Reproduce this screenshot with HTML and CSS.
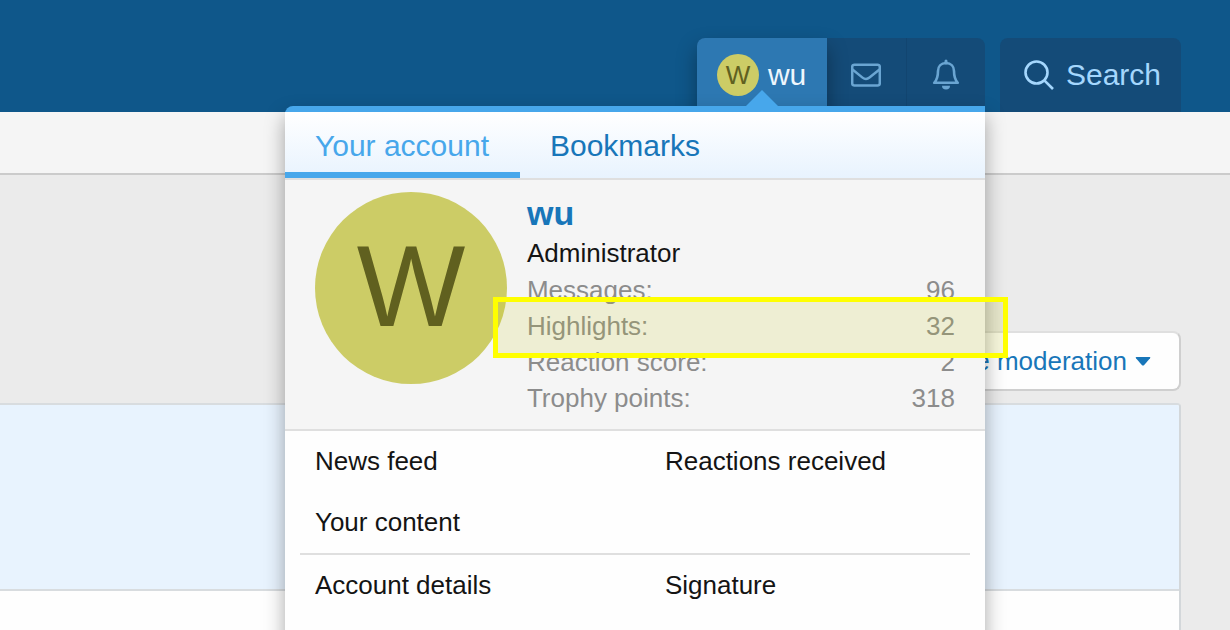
FILE: index.html
```
<!DOCTYPE html>
<html lang="en">
<head>
  <meta charset="UTF-8" />
  <meta name="viewport" content="width=device-width, initial-scale=1.0" />
  <title>Your account</title>
  <link rel="stylesheet" href="styles.css">
</head>
<body>

  <header class="header">
    <nav class="nav-group account">
      <a class="nav-link active" href="#">
        <span class="avatar avatar-small">W</span>
        <span>wu</span>
      </a>
      <a class="nav-link nav-icon" href="#" aria-label="Inbox">
        <svg width="30" height="24" viewBox="0 0 30 24" fill="none" stroke="currentColor" stroke-width="2.5" stroke-linejoin="round">
          <rect x="1.2" y="1.8" width="27.6" height="20.6" rx="2.2" />
          <path d="M1.500 6.500 L11.500 14.600 Q15 17.400 18.500 14.600 L28.500 6.500" />
        </svg>
      </a>
      <a class="nav-link nav-icon" href="#" aria-label="Alerts">
        <svg width="28" height="32" viewBox="0 0 28 32" fill="none" stroke="currentColor" stroke-width="2.6" stroke-linejoin="round">
          <path d="M14 2 V4" stroke-width="3" stroke-linecap="round" />
          <path d="M14 4 C9 4 6 7.500 6 12 C6 18 4.500 21.500 2.200 23.800 H25.800 C23.500 21.500 22 18 22 12 C22 7.500 19 4 14 4 Z" />
          <path d="M10 26.800 H18 A4 3.800 0 0 1 10 26.800 Z" fill="currentColor" stroke="none" />
        </svg>
      </a>

      <!-- Account menu -->
      <div class="menu">
        <div class="menu-arrow"></div>
        <div class="tabs">
          <a class="tab active" href="#">Your account</a>
          <a class="tab" href="#">Bookmarks</a>
        </div>
        <div class="profile">
          <span class="avatar avatar-large">W</span>
          <div class="profile-info">
            <a class="username" href="#">wu</a>
            <div class="user-title">Administrator</div>
            <dl class="stats">
              <div class="stat"><dt>Messages:</dt><dd>96</dd></div>
              <div class="stat marked"><dt>Highlights:</dt><dd>32</dd></div>
              <div class="stat"><dt>Reaction score:</dt><dd>2</dd></div>
              <div class="stat"><dt>Trophy points:</dt><dd>318</dd></div>
            </dl>
          </div>
        </div>
        <div class="menu-links">
          <a href="#">News feed</a>
          <a href="#">Reactions received</a>
          <a href="#">Your content</a>
        </div>
        <hr class="separator">
        <div class="menu-links">
          <a href="#">Account details</a>
          <a href="#">Signature</a>
        </div>
      </div>
    </nav>

    <button class="nav-group search" type="button">
      <svg width="30" height="30" viewBox="0 0 30 30" fill="none" stroke="currentColor" stroke-width="2.6">
        <circle cx="12.500" cy="12.500" r="11" />
        <path d="M20.300 20.300 L29 29" />
      </svg>
      <span>Search</span>
    </button>
  </header>

  <div class="sub-nav"></div>

  <main class="content">
    <button class="moderation" type="button">
      Inline moderation
      <svg width="16" height="9" viewBox="0 0 16 9"><path d="M1.500 0 H14.500 Q16 0 15 1.200 L9 8.200 Q8 9 7 8.200 L1 1.200 Q0 0 1.500 0 Z" fill="currentColor" /></svg>
    </button>
    <div class="block">
      <div class="block-row"></div>
    </div>
  </main>

</body>
</html>
```
FILE: styles.css
```
* { box-sizing: border-box; margin: 0; padding: 0; }
body {
  display: flex;
  flex-direction: column;
  height: 100vh;
  overflow: hidden;
  background: #ebebeb;
  font-family: "Liberation Sans", Arial, sans-serif;
  font-size: 26px;
  line-height: 36px;
  color: #141414;
}
a { color: inherit; text-decoration: none; }
button { border: none; font: inherit; cursor: pointer; }
svg { display: block; flex: none; }

/* Header */
.header {
  display: flex;
  justify-content: flex-end;
  gap: 15px;
  padding: 38px 49px 0 0;
  background: #0f578a;
}
.nav-group {
  display: flex;
  height: 74px;
  border-radius: 8px 8px 0 0;
  background: #144b78;
}
.account { position: relative; }
.nav-link {
  display: flex;
  align-items: center;
  gap: 9px;
  padding: 0 20px;
  font-size: 30px;
  color: #6aa5d2;
}
.nav-link.active {
  z-index: 1;
  width: 130px;
  border-radius: 8px 0 0 0;
  background: #2d78b2;
  box-shadow: 0 10px 20px rgba(0, 0, 0, 0.35);
  color: #edf6fd;
}
.nav-icon {
  justify-content: center;
  width: 79px;
}
.nav-icon + .nav-icon { border-left: 1px solid #124570; }
.search {
  align-items: center;
  gap: 12px;
  padding: 0 20px 0 24px;
  font-size: 30px;
  color: #a5d7fd;
}

.avatar {
  display: flex;
  flex: none;
  align-items: center;
  justify-content: center;
  border-radius: 50%;
  background: #cccc66;
  color: #60601f;
}
.avatar-small {
  width: 42px;
  height: 42px;
  font-size: 26px;
}
.avatar-large {
  width: 192px;
  height: 192px;
  padding-bottom: 4px;
  font-size: 115px;
}

/* Menu */
.menu {
  position: absolute;
  top: 68px;
  right: 0;
  z-index: 2;
  width: 700px;
  padding-bottom: 30px;
  border-top: 6px solid #47a7eb;
  border-radius: 8px 0 0 0;
  background: #fefefe;
  box-shadow: 0 10px 20px rgba(0, 0, 0, 0.35);
}
.menu-arrow {
  position: absolute;
  top: -22px;
  left: 461px;
  border: 16px solid transparent;
  border-top: none;
  border-bottom-color: #47a7eb;
}
.tabs {
  display: flex;
  border-bottom: 2px solid #dfdfdf;
  background: linear-gradient(#ffffff, #e8f3fe);
}
.tab {
  padding: 16px 31px 8px 30px;
  border-bottom: 6px solid transparent;
  font-size: 30px;
  color: #1876b9;
}
.tab.active {
  border-bottom-color: #47a7eb;
  color: #47a7eb;
}
.profile {
  display: flex;
  gap: 20px;
  padding: 12px 30px 13px;
  border-bottom: 2px solid #dfdfdf;
  background: #f5f5f5;
}
.profile-info { flex: 1; }
.username {
  display: block;
  margin-bottom: 1px;
  font-size: 34px;
  font-weight: bold;
  line-height: 42px;
  color: #1876b9;
}
.stats {
  margin-top: 1px;
  color: #8c8c8c;
}
.stat {
  display: flex;
  justify-content: space-between;
}
.marked { position: relative; }
.marked::after {
  content: "";
  position: absolute;
  inset: -11px -53px -14px -34px;
  border: 5px solid #ffff00;
  background: rgba(200, 200, 20, 0.15);
}
.menu-links {
  display: grid;
  grid-template-columns: 1fr 1fr;
}
.menu-links a { padding: 12px 30px 13px; }
.separator {
  margin: 0 15px;
  border: none;
  border-top: 2px solid #dfdfdf;
}

/* Page */
.sub-nav {
  flex: none;
  height: 63px;
  border-bottom: 2px solid #cbcbcb;
  background: #f5f5f5;
}
.content {
  display: flex;
  flex: 1;
  flex-direction: column;
  padding: 156px 49px 0 0;
}
.moderation {
  display: flex;
  align-items: center;
  align-self: flex-end;
  gap: 8px;
  padding: 10px 28px;
  border: 2px solid #cfcfcf;
  border-top-color: #dfdfdf;
  border-radius: 8px;
  background: #fefefe;
  color: #1876b9;
}
.block {
  flex: 1;
  margin-top: 12px;
  border-top: 2px solid #d8dcdf;
  border-right: 2px solid #d3d7da;
  border-radius: 0 4px 0 0;
  background: #fefefe;
}
.block-row {
  height: 186px;
  border-bottom: 2px solid #d8dcdf;
  border-radius: 0 2px 0 0;
  background: #e8f3fe;
}
```
